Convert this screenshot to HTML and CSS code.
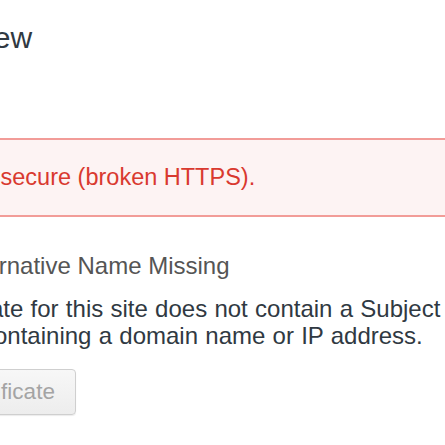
FILE: index.html
```html
<!DOCTYPE html>
<html lang="en">
<head>
<meta charset="utf-8">
<title>Security overview</title>
<link rel="stylesheet" href="styles.css">
</head>
<body>
<div class="page">
  <h1 class="title">Security overview</h1>
  <div class="summary">
    <div class="summary-text">This page is insecure (broken HTTPS).</div>
  </div>
  <div class="explanation">
    <div class="exp-title">Subject Alternative Name Missing</div>
    <p class="exp-text">The certificate for this site does not contain a Subject Alternative Name extension containing a domain name or IP address.</p>
    <button class="cert-btn" type="button">View certificate</button>
  </div>
</div>
</body>
</html>
```
FILE: styles.css
```css
html, body {
  margin: 0;
  padding: 0;
  background: #ffffff;
  overflow: hidden;
}
body {
  width: 445px;
  height: 445px;
  font-family: "Liberation Sans", Arial, sans-serif;
}
.page {
  margin-left: -210px;
  width: 1100px;
}
.title {
  margin: 20px 0 0 7px;
  font-size: 30px;
  line-height: 36px;
  font-weight: normal;
  color: #303942;
}
.summary {
  margin-top: 82px;
  border-top: 2px solid #f29c98;
  border-bottom: 2px solid #f29c98;
  background: #fdf3f3;
  padding: 23px 0 24px 59px;
}
.summary-text {
  font-size: 23.5px;
  line-height: 28px;
  color: #d9392f;
}
.explanation {
  margin-left: 82px;
  width: 800px;
}
.exp-title {
  margin-top: 35px;
  font-size: 24px;
  line-height: 28px;
  color: #555555;
}
.exp-text {
  margin: 15px 0 0 0;
  font-size: 24px;
  line-height: 27px;
  word-spacing: 0.6px;
  color: #303942;
}
.cert-btn {
  display: block;
  margin: 20px 0 0 9px;
  padding: 9px 20px 9px 22px;
  font-family: "Liberation Sans", Arial, sans-serif;
  font-size: 22.5px;
  line-height: 26px;
  color: #a4a4a4;
  background: linear-gradient(#f7f7f7, #ededed);
  border: 1px solid #cfcfcf;
  border-radius: 4px;
  box-shadow: 0 1px 1px rgba(0, 0, 0, 0.08);
}
```
